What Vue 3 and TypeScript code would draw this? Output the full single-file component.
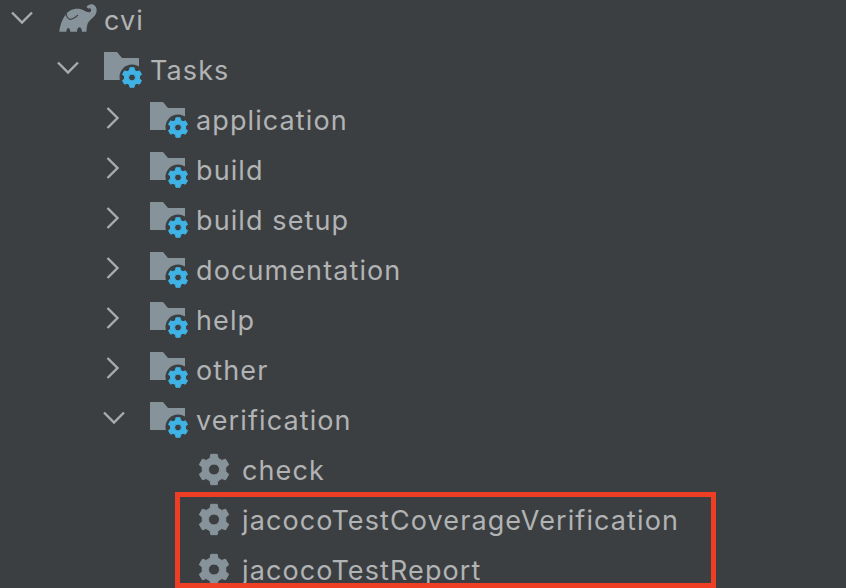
<script setup lang="ts">
interface Row {
  label: string
  level: number
  icon: 'gradle' | 'folder' | 'gear'
  chevron?: 'open' | 'closed'
}
const rows: Row[] = [
  { label: 'cvi', level: 0, icon: 'gradle', chevron: 'open' },
  { label: 'Tasks', level: 1, icon: 'folder', chevron: 'open' },
  { label: 'application', level: 2, icon: 'folder', chevron: 'closed' },
  { label: 'build', level: 2, icon: 'folder', chevron: 'closed' },
  { label: 'build setup', level: 2, icon: 'folder', chevron: 'closed' },
  { label: 'documentation', level: 2, icon: 'folder', chevron: 'closed' },
  { label: 'help', level: 2, icon: 'folder', chevron: 'closed' },
  { label: 'other', level: 2, icon: 'folder', chevron: 'closed' },
  { label: 'verification', level: 2, icon: 'folder', chevron: 'open' },
  { label: 'check', level: 3, icon: 'gear' },
  { label: 'jacocoTestCoverageVerification', level: 3, icon: 'gear' },
  { label: 'jacocoTestReport', level: 3, icon: 'gear' },
]

// six-toothed cog centred on (cx, cy), with a round hole
function cog(cx: number, cy: number, outer: number, root: number, hole: number): string {
  const pt = (r: number, deg: number) => {
    const a = (deg * Math.PI) / 180
    return `${(cx + r * Math.cos(a)).toFixed(2)} ${(cy + r * Math.sin(a)).toFixed(2)}`
  }
  let d = ''
  for (let i = 0; i < 6; i++) {
    const c = i * 60 - 90
    d += `${i === 0 ? 'M' : 'L'}${pt(root, c - 19)}L${pt(outer, c - 12)}L${pt(outer, c + 12)}L${pt(root, c + 19)}`
  }
  d += `ZM${cx - hole} ${cy}a${hole} ${hole} 0 1 0 ${hole * 2} 0a${hole} ${hole} 0 1 0 ${-hole * 2} 0Z`
  return d
}
const blueCog = cog(28, 25.5, 10, 7.6, 3.4)
const greyCog = cog(18, 17.5, 15.5, 12, 5.5)
</script>

<template>
  <div class="screen">
    <div class="tree">
      <div v-for="row in rows" :key="row.label" class="row" :style="{ paddingLeft: `${row.level * 46}px` }">
        <span class="chevron">
          <svg v-if="row.chevron === 'open'" width="24" height="14" viewBox="0 0 24 14">
            <path d="M2 1.500l10 10 10-10" fill="none" stroke="#a9abac" stroke-width="2.4" />
          </svg>
          <svg v-else-if="row.chevron === 'closed'" class="chevron-closed" width="14" height="24" viewBox="0 0 14 24">
            <path d="M1.500 2l10 10-10 10" fill="none" stroke="#a9abac" stroke-width="2.4" />
          </svg>
        </span>
        <span class="icon">
          <svg v-if="row.icon === 'gradle'" width="40" height="36" viewBox="-1 -2 40 36">
            <path fill="#87939a" d="M.3 27.700C1 20 5 10 11.300 6.500 15 4.500 21 4 25 6.500c3 1.800 6 2.500 7 .5.700-2-1-3.500-2.500-2.300L27.500 3C29 .5 32-.2 34.500.7 38 2.300 38.500 7 36.500 10.500 34 14.500 30 16 28.500 20c-.7 2.500-1 5-1.100 7.700H23c-.3-2.700-1.200-4.400-2.600-4.400-1.400 0-2.200 1.700-2.400 4.400h-6.700c-.3-2.200-1-3.700-2-3.700s-1.800 1.500-2 3.700z" />
            <path fill="none" stroke="#3c3f41" stroke-width="1.200" d="M7 9.300c.5 3.500 2.500 6 4.300 6 3 0 5.700-2.500 7.700-4.300" />
          </svg>
          <svg v-else-if="row.icon === 'folder'" width="40" height="38" viewBox="0 -1 40 38">
            <path fill="#87939a" d="M0 0h13l5 6h17v22H0z" />
            <circle cx="28" cy="25" r="12.500" fill="#3c3f41" />
            <path fill="#3fb3e6" stroke="#3fb3e6" stroke-width="1" stroke-linejoin="round" fill-rule="evenodd" :d="blueCog" />
          </svg>
          <svg v-else width="36" height="36" viewBox="0 0 36 36">
            <path fill="#87939a" stroke="#87939a" stroke-width="1" stroke-linejoin="round" fill-rule="evenodd" :d="greyCog" />
          </svg>
        </span>
        <span class="label">{{ row.label }}</span>
      </div>
    </div>
    <div class="highlight"></div>
  </div>
</template>

<style>
html, body { margin: 0; background: #3c3f41; }
</style>

<style scoped>
.screen {
  position: relative;
  width: 846px;
  height: 588px;
  overflow: hidden;
  background: #3c3f41;
}
.tree {
  display: flex;
  flex-direction: column;
  margin-top: -5px;
}
.row {
  display: flex;
  align-items: center;
  height: 50px;
  flex: none;
}
.chevron {
  display: flex;
  align-items: center;
  justify-content: center;
  width: 44px;
  height: 46px;
  margin-right: 14px;
  margin-bottom: 4px;
  flex: none;
}
.chevron-closed {
  margin-right: 3px;
}
.icon {
  display: flex;
  align-items: center;
  width: 46px;
  flex: none;
}
.label {
  font-family: Inter, "Liberation Sans", sans-serif;
  font-size: 27px;
  color: #b1b3b4;
  letter-spacing: 1.1px;
  white-space: nowrap;
}
.highlight {
  position: absolute;
  left: 175px;
  top: 492px;
  width: 531px;
  height: 86px;
  border: 5px solid #ee3f24;
}
</style>
